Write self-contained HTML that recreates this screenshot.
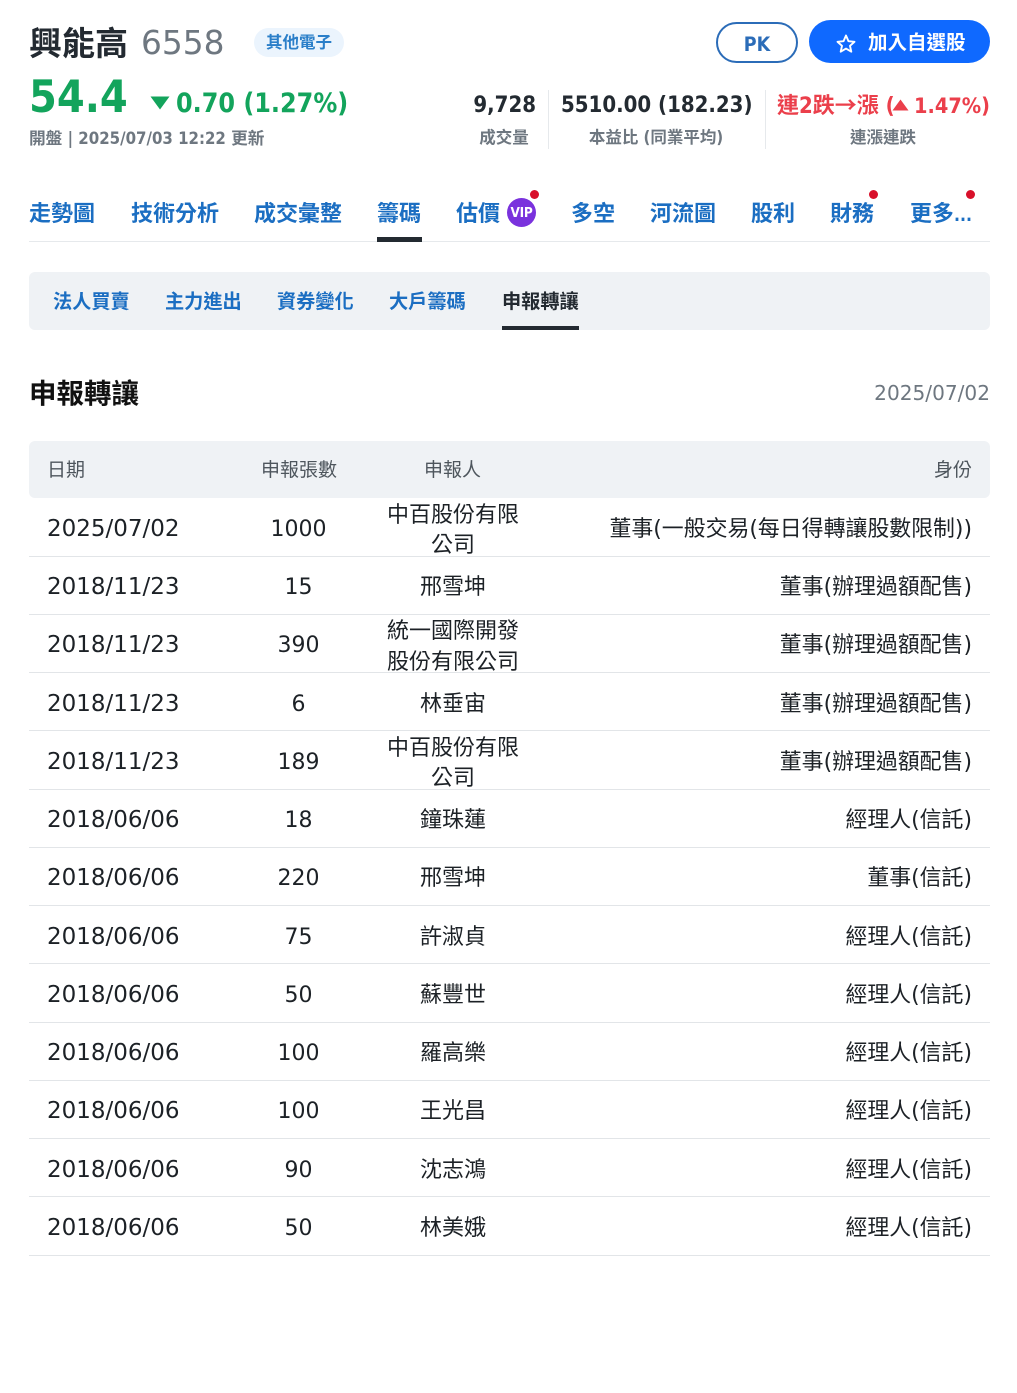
<!DOCTYPE html>
<html lang="zh-Hant"><head><meta charset="utf-8"><title>興能高 6558</title>
<style>
html,body{margin:0;padding:0;background:#fff}
body{width:1017px;height:1393px;position:relative;overflow:hidden;font-family:"DejaVu Sans","WenQuanYi Zen Hei","Noto Sans CJK TC",sans-serif;color:#232a31}
.a{position:absolute;white-space:nowrap}
.c{font-family:"DejaVu Sans Condensed","DejaVu Sans","WenQuanYi Zen Hei","Noto Sans CJK TC",sans-serif;font-stretch:condensed;font-weight:700}
.t{font-size:22px;line-height:30px;top:200px;color:#1b6ec2}
.s{font-size:19.2px;line-height:26px;top:288.500px;color:#1b6ec2}
.dot{position:absolute;width:9px;height:9px;border-radius:50%;background:#d8102a;top:190px}
.b{font-size:22px;line-height:30px;top:91px}
.l{font-size:16.5px;line-height:22px;top:127px;color:#6e7780;text-align:center}
.sep{position:absolute;top:90px;height:59px;width:1px;background:#e6e9ec}
.th{font-size:19px;line-height:26px;top:457px;color:#4e565d}
.row{position:absolute;left:29px;width:961px;height:57.25px;border-bottom:1px solid #e2e5e8;font-size:23px;line-height:30.5px;color:#1c2126}
.row div{position:absolute;top:15.6px;white-space:nowrap}
.d{left:18px}
.row .n{left:219.5px;width:100px;text-align:center;font-size:22px;top:16.6px}
.row .p{left:344px;width:160px;text-align:center;font-size:22px;top:16.6px}
.row .p.two{top:2.6px}
.row .r{right:18px;font-size:21.900px;top:16.6px}
</style></head><body>

<div class="a c" style="left:29px;top:23px;font-size:33px;line-height:42px">興能高</div>
<div class="a" style="left:141px;top:22px;font-size:32.800px;line-height:42px;color:#6e7780">6558</div>
<div class="a c" style="left:254px;top:28px;width:90px;height:29px;border-radius:15px;background:#ebf4fd;color:#2b7fc9;font-size:16.5px;line-height:29px;text-align:center">其他電子</div>

<div class="a c" style="left:29px;top:72px;font-size:44.500px;line-height:52px;color:#13a45c">54.4</div>
<svg class="a" style="left:150px;top:96px" width="20" height="14"><path d="M0.5 0.5H19.5L10 13.5Z" fill="#13a45c"/></svg>
<div class="a c" style="left:176px;top:87px;font-size:26.600px;line-height:34px;color:#13a45c">0.70 (1.27%)</div>
<div class="a c" style="left:29px;top:127px;font-size:16.700px;line-height:22px;color:#6e7780">開盤 | 2025/07/03 12:22 更新</div>

<div class="a c" style="left:716px;top:22px;width:78px;height:37px;border:2px solid #2b6cb8;border-radius:21px;text-align:center;font-size:19.500px;line-height:41px;color:#2b6cb8">PK</div>
<div class="a" style="left:809px;top:20px;width:181px;height:43px;border-radius:22px;background:#0f69ff"></div>
<svg class="a" style="left:835px;top:33px" width="22" height="21" viewBox="0 0 22 21"><path d="M11 2.5L13.5 8.2 19.5 8.8 15 12.8 16.3 18.7 11 15.6 5.700 18.7 7 12.800 2.500 8.800 8.500 8.200Z" fill="none" stroke="#fff" stroke-width="1.900" stroke-linejoin="round"/></svg>
<div class="a c" style="left:868px;top:28px;font-size:19.500px;line-height:30px;color:#fff">加入自選股</div>

<div class="a b c" style="right:481px">9,728</div>
<div class="a l c" style="left:454px;width:100px">成交量</div>
<div class="sep" style="left:548px"></div>
<div class="a b c" style="left:561px">5510.00 (182.23)</div>
<div class="a l c" style="left:556px;width:200px">本益比 (同業平均)</div>
<div class="sep" style="left:765px"></div>
<div class="a c" style="left:777px;top:89px;font-size:22px;line-height:30px;color:#eb3f4b">連2跌<span style="font-family:'WenQuanYi Zen Hei','Noto Sans CJK TC',sans-serif;font-stretch:normal">→</span>漲 (</div>
<svg class="a" style="left:892px;top:99px" width="17" height="12"><path d="M8.500 0.500L16.500 11.500H0.500Z" fill="#eb3f4b"/></svg>
<div class="a c" style="right:27px;top:92px;font-size:21.500px;line-height:30px;color:#eb3f4b">1.47%)</div>
<div class="a l c" style="left:833px;width:100px">連漲連跌</div>

<div class="a t c" style="left:29px">走勢圖</div>
<div class="a t c" style="left:131px">技術分析</div>
<div class="a t c" style="left:254px">成交彙整</div>
<div class="a t c" style="left:377px">籌碼</div>
<div class="a t c" style="left:456px">估價</div>
<div class="a c" style="left:507px;top:198px;width:29px;height:29px;border-radius:50%;background:#7a32dd;color:#fff;font-size:13.500px;line-height:30px;text-align:center;letter-spacing:-.3px">VIP</div>
<div class="dot" style="left:530px"></div>
<div class="a t c" style="left:571px">多空</div>
<div class="a t c" style="left:650px">河流圖</div>
<div class="a t c" style="left:751px">股利</div>
<div class="a t c" style="left:830px">財務</div>
<div class="dot" style="left:869px"></div>
<div class="a t c" style="left:910px">更多<span style="font-size:17.500px">...</span></div>
<div class="dot" style="left:966px"></div>
<div class="a" style="left:29px;top:241px;width:961px;height:1px;background:#e6e9ec"></div>
<div class="a" style="left:377px;top:237px;width:45px;height:4.500px;background:#232a31"></div>

<div class="a" style="left:29px;top:272px;width:961px;height:58px;border-radius:6px;background:#eff2f5"></div>
<div class="a s c" style="left:53px">法人買賣</div>
<div class="a s c" style="left:165px">主力進出</div>
<div class="a s c" style="left:277px">資券變化</div>
<div class="a s c" style="left:389px">大戶籌碼</div>
<div class="a s c" style="left:502px;color:#232a31">申報轉讓</div>
<div class="a" style="left:502px;top:326px;width:77px;height:4px;background:#232a31"></div>

<div class="a c" style="left:29px;top:376px;font-size:27.500px;line-height:36px;color:#111">申報轉讓</div>
<div class="a" style="right:27px;top:380px;font-size:20.100px;line-height:26px;color:#6e7780">2025/07/02</div>

<div class="a" style="left:29px;top:441px;width:961px;height:57px;border-radius:6px;background:#eff2f5"></div>
<div class="a th" style="left:47px">日期</div>
<div class="a th" style="left:261px">申報張數</div>
<div class="a th" style="left:424px">申報人</div>
<div class="a th" style="right:45px">身份</div>

<div class="row" style="top:498.3px"><div class="d">2025/07/02</div><div class="n">1000</div><div class="p two">中百股份有限<br>公司</div><div class="r">董事(一般交易(每日得轉讓股數限制))</div></div>
<div class="row" style="top:556.55px"><div class="d">2018/11/23</div><div class="n">15</div><div class="p">邢雪坤</div><div class="r">董事(辦理過額配售)</div></div>
<div class="row" style="top:614.8px"><div class="d">2018/11/23</div><div class="n">390</div><div class="p two">統一國際開發<br>股份有限公司</div><div class="r">董事(辦理過額配售)</div></div>
<div class="row" style="top:673.05px"><div class="d">2018/11/23</div><div class="n">6</div><div class="p">林垂宙</div><div class="r">董事(辦理過額配售)</div></div>
<div class="row" style="top:731.3px"><div class="d">2018/11/23</div><div class="n">189</div><div class="p two">中百股份有限<br>公司</div><div class="r">董事(辦理過額配售)</div></div>
<div class="row" style="top:789.55px"><div class="d">2018/06/06</div><div class="n">18</div><div class="p">鐘珠蓮</div><div class="r">經理人(信託)</div></div>
<div class="row" style="top:847.8px"><div class="d">2018/06/06</div><div class="n">220</div><div class="p">邢雪坤</div><div class="r">董事(信託)</div></div>
<div class="row" style="top:906.05px"><div class="d">2018/06/06</div><div class="n">75</div><div class="p">許淑貞</div><div class="r">經理人(信託)</div></div>
<div class="row" style="top:964.3px"><div class="d">2018/06/06</div><div class="n">50</div><div class="p">蘇豐世</div><div class="r">經理人(信託)</div></div>
<div class="row" style="top:1022.55px"><div class="d">2018/06/06</div><div class="n">100</div><div class="p">羅高樂</div><div class="r">經理人(信託)</div></div>
<div class="row" style="top:1080.8px"><div class="d">2018/06/06</div><div class="n">100</div><div class="p">王光昌</div><div class="r">經理人(信託)</div></div>
<div class="row" style="top:1139.05px"><div class="d">2018/06/06</div><div class="n">90</div><div class="p">沈志鴻</div><div class="r">經理人(信託)</div></div>
<div class="row" style="top:1197.3px"><div class="d">2018/06/06</div><div class="n">50</div><div class="p">林美娥</div><div class="r">經理人(信託)</div></div>

</body></html>
